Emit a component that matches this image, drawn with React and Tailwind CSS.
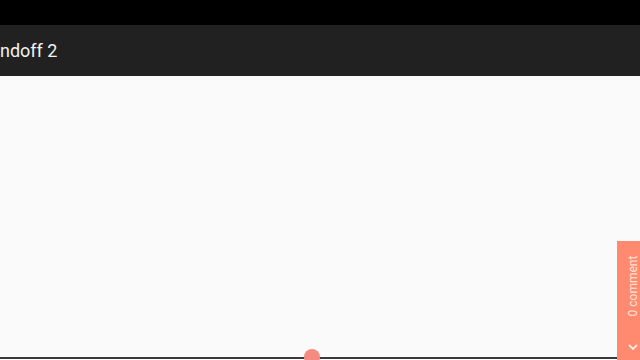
export default function App() {
  return (
    <div className="relative flex h-[360px] w-[640px] flex-col overflow-hidden bg-[#fafafa] font-['Roboto',sans-serif]">
      <div className="h-[25px] shrink-0 bg-black" />
      <div className="flex h-[51px] shrink-0 items-center bg-[#212121]">
        <span className="text-[18px] leading-none text-[#f2f2f2]">ndoff 2</span>
      </div>
      <div className="flex-1" />
      <div className="h-[2px] shrink-0 bg-[#3a3a3a]" />
      <div className="h-[1px] shrink-0 bg-white" />

      {/* comment tab */}
      <div className="absolute bottom-0 right-0 flex h-[119px] w-[23px] flex-col items-center bg-[#ff8a70] pl-[9px]">
        <div className="flex h-[90px] w-full items-center justify-center">
          <span className="-rotate-90 whitespace-nowrap text-[12px] leading-none text-[#ffe3d8]">
            0 comment
          </span>
        </div>
        <svg className="mt-[13px]" width="10" height="7" viewBox="0 0 10 7" fill="none">
          <path d="M1.5 1.5L5 5L8.5 1.5" stroke="#ffeadf" strokeWidth="1.8" strokeLinecap="round" />
        </svg>
      </div>

      {/* scroll indicator */}
      <div className="absolute left-[304px] top-[349px] h-[16px] w-[16px] rounded-full bg-[#f48a80]" />
    </div>
  );
}
